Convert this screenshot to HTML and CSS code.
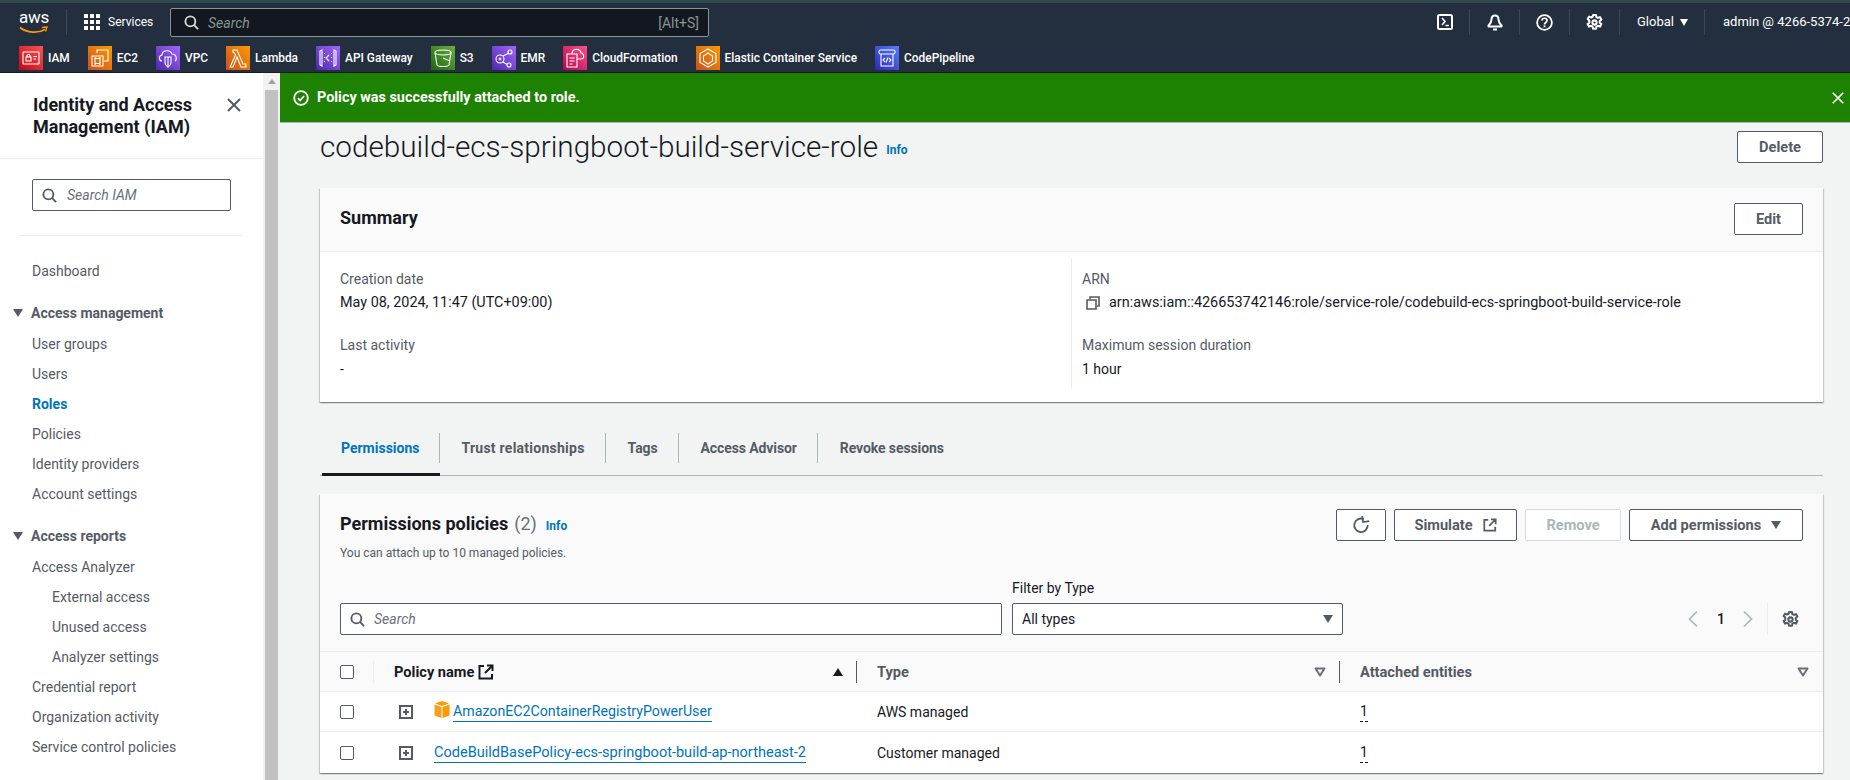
FILE: index.html
```html
<!DOCTYPE html>
<html lang="en">

<head>
    <meta charset="UTF-8">
    <title>IAM - Role</title>
    <link rel="stylesheet" href="styles.css">
</head>

<body>
    <svg class="sprite" width="0" height="0">
        <symbol id="i-search" viewBox="0 0 16 16"><circle cx="6.8" cy="6.8" r="5.3" fill="none" stroke="currentColor" stroke-width="2"/><path d="M10.6 10.6 15 15" fill="none" stroke="currentColor" stroke-width="2"/></symbol>
        <symbol id="i-gear" viewBox="0 0 16 16"><path d="M6.6 1h2.8l.4 2 1.4.7 1.9-.8 1.4 2.3-1.6 1.4v1.6l1.6 1.3-1.4 2.4-1.9-.8-1.4.8-.4 2H6.6l-.4-2-1.4-.8-1.9.8-1.4-2.4 1.6-1.3V6.2L1.5 4.8l1.4-2.3 1.9.8 1.4-.7z" fill="none" stroke="currentColor" stroke-width="1.9" stroke-linejoin="round"/><circle cx="8" cy="8" r="2" fill="none" stroke="currentColor" stroke-width="1.9"/></symbol>
        <symbol id="i-ext" viewBox="0 0 16 16"><path d="M6 2H1.5v12.5H14V10M9 1.5h5.500V7M14 2 7 9" fill="none" stroke="currentColor" stroke-width="2"/></symbol>
        <symbol id="i-expand" viewBox="0 0 14 14"><rect x="1" y="1" width="12" height="12" fill="none" stroke="currentColor" stroke-width="2"/><path d="M7 4v6M4 7h6" stroke="currentColor" stroke-width="2"/></symbol>
        <symbol id="i-close" viewBox="0 0 16 16"><path d="M2 2l12 12M14 2 2 14" fill="none" stroke="currentColor" stroke-width="2"/></symbol>
        <symbol id="i-sort" viewBox="0 0 12 10"><path d="M1.500 1.500h9L6 8.500z" fill="none" stroke="currentColor" stroke-width="2" stroke-linejoin="round"/></symbol>
    </svg>

    <header class="top-nav">
        <div class="nav-row">
            <a class="aws-logo">
                <span class="aws-word">aws</span>
                <svg class="aws-smile" width="30" height="8" viewBox="0 0 30 8"><path d="M1 1.500C8 7 19 7.500 26 3.500" fill="none" stroke="#f90" stroke-width="1.800"/><path d="M23 1.500l5-.5-1.500 4.500" fill="none" stroke="#f90" stroke-width="1.300"/></svg>
            </a>
            <span class="nav-sep first"></span>
            <svg class="grid-icon" width="16" height="16" viewBox="0 0 16 16" fill="#fff">
                <rect width="4" height="4"/><rect x="6" width="4" height="4"/><rect x="12" width="4" height="4"/>
                <rect y="6" width="4" height="4"/><rect x="6" y="6" width="4" height="4"/><rect x="12" y="6" width="4" height="4"/>
                <rect y="12" width="4" height="4"/><rect x="6" y="12" width="4" height="4"/><rect x="12" y="12" width="4" height="4"/>
            </svg>
            <span class="services">Services</span>
            <div class="nav-search">
                <svg width="15" height="15"><use href="#i-search"/></svg>
                <span class="nav-search-text">Search</span>
                <span class="nav-search-key">[Alt+S]</span>
            </div>
            <div class="nav-right">
                <span class="nav-icon">
                    <svg width="16" height="16" viewBox="0 0 16 16"><rect x="1" y="1" width="14" height="14" rx="1.500" fill="none" stroke="#fff" stroke-width="2"/><path d="M5 4l3 3.500L5 11M8.500 11.500H12" fill="none" stroke="#fff" stroke-width="1.600"/></svg>
                </span>
                <span class="nav-icon">
                    <svg width="16" height="17" viewBox="0 0 16 17"><path d="M8 1.500c-2.500 0-3.500 2-3.500 4 0 2.500-1 4-3 6v1h13v-1c-2-2-3-3.500-3-6 0-2-1-4-3.500-4z" fill="none" stroke="#fff" stroke-width="2" stroke-linejoin="round"/><path d="M6 14.500h4v2H6z" fill="#fff"/></svg>
                </span>
                <span class="nav-icon">
                    <svg width="17" height="17" viewBox="0 0 17 17"><circle cx="8.500" cy="8.500" r="7.400" fill="none" stroke="#fff" stroke-width="1.800"/><path d="M6 6.500c0-3 5-3 5 0 0 2-2.500 2-2.500 4" fill="none" stroke="#fff" stroke-width="1.700"/><rect x="7.600" y="11.400" width="1.800" height="1.800" fill="#fff"/></svg>
                </span>
                <span class="nav-icon">
                    <svg width="17" height="17" color="#fff"><use href="#i-gear"/></svg>
                </span>
                <span class="nav-region">Global <i class="caret"></i></span>
                <span class="nav-user">admin @ 4266-5374-2</span>
            </div>
        </div>
        <div class="fav-row">
            <a class="fav"><svg class="fav-icon red" viewBox="0 0 24 24"><rect x="4" y="6" width="16" height="12" rx=".5"/><rect x="7" y="11" width="5" height="4"/><path d="M8 11V9.500c0-1.400 3-1.400 3 0V11M14.500 10.500H18M14.500 13H17"/></svg>IAM</a>
            <a class="fav"><svg class="fav-icon orange" viewBox="0 0 24 24"><path d="M9 7V4h11v11h-4M4 10h11v10H4z"/><rect x="7" y="12.500" width="5" height="5"/><path d="M7 11v1M12 11v1M7 18v1M12 18v1"/></svg>EC2</a>
            <a class="fav"><svg class="fav-icon purple" viewBox="0 0 24 24"><path d="M6 15c-3 0-4-5 0-6 0-5 8-6 10-1 5 0 5 6 3 7"/><path d="M9 11h6v6c0 2-2 3-3 4-1-1-3-2-3-4z"/><path d="M12 11v9"/></svg>VPC</a>
            <a class="fav"><svg class="fav-icon orange" viewBox="0 0 24 24"><path d="M7 4h4l6 14h3v3h-5L11 11 7 21H4l5.500-12L8 6.500H7z"/></svg>Lambda</a>
            <a class="fav"><svg class="fav-icon purple" viewBox="0 0 24 24"><path d="M6 4 4 5v14l2 1zM18 4l2 1v14l-2 1zM8.500 7v1M8.500 11v1M8.500 15v1M15.500 7v1M15.500 11v1M15.500 15v1M13 9l-3 3 3 3"/></svg>API Gateway</a>
            <a class="fav"><svg class="fav-icon green" viewBox="0 0 24 24"><ellipse cx="12" cy="6.500" rx="8" ry="2.500"/><path d="M4 6.500 6 19c1 2 11 2 12 0l2-12.500M12 12l7 3"/></svg>S3</a>
            <a class="fav"><svg class="fav-icon purple" viewBox="0 0 24 24"><circle cx="8" cy="13" r="4"/><circle cx="18" cy="6" r="2"/><circle cx="17" cy="19" r="2"/><path d="M11 10l6-3M10.500 16l5 2.500M6.500 13h3M8 11.500v3"/></svg>EMR</a>
            <a class="fav"><svg class="fav-icon pink" viewBox="0 0 24 24"><path d="M4 8h10v13H4zM6.500 12h5M6.500 15h5M6.500 18h3M9 8c0-6 8-6 9-1 3 0 4 6 0 6h-4"/></svg>CloudFormation</a>
            <a class="fav"><svg class="fav-icon orange" viewBox="0 0 24 24"><path d="M12 3l8 4.500v9L12 21l-8-4.500v-9zM12 7l4.500 3v5L12 18l-4.500-3v-5z"/></svg>Elastic Container Service</a>
            <a class="fav"><svg class="fav-icon blue" viewBox="0 0 24 24"><rect x="4" y="4" width="16" height="4" rx="1.500"/><path d="M6 8v12h12V8M10 12l-2 2 2 2M14 12l2 2-2 2M13 11.500l-2 5"/></svg>CodePipeline</a>
        </div>
    </header>

    <div class="page">
        <aside class="side">
            <div class="side-title">
                <h2>Identity and Access Management (IAM)</h2>
                <svg class="side-close" width="16" height="16"><use href="#i-close"/></svg>
            </div>
            <div class="side-search">
                <svg width="15" height="15"><use href="#i-search"/></svg>
                <span>Search IAM</span>
            </div>
            <div class="side-divider"></div>
            <a class="side-link first">Dashboard</a>
            <div class="side-head"><i class="caret dark"></i>Access management</div>
            <a class="side-link">User groups</a>
            <a class="side-link">Users</a>
            <a class="side-link active">Roles</a>
            <a class="side-link">Policies</a>
            <a class="side-link">Identity providers</a>
            <a class="side-link">Account settings</a>
            <div class="side-head"><i class="caret dark"></i>Access reports</div>
            <a class="side-link">Access Analyzer</a>
            <a class="side-link sub">External access</a>
            <a class="side-link sub">Unused access</a>
            <a class="side-link sub">Analyzer settings</a>
            <a class="side-link">Credential report</a>
            <a class="side-link">Organization activity</a>
            <a class="side-link">Service control policies</a>
        </aside>

        <div class="scrollbar">
            <i class="scroll-up"></i>
            <div class="scroll-thumb"></div>
        </div>

        <main class="main">
            <div class="flash">
                <svg width="16" height="16" viewBox="0 0 16 16"><circle cx="8" cy="8" r="6.800" fill="none" stroke="#fff" stroke-width="1.800"/><path d="M4.800 8.200l2.300 2.300 4-4.500" fill="none" stroke="#fff" stroke-width="1.800"/></svg>
                <span class="flash-text">Policy was successfully attached to role.</span>
                <svg class="flash-close" width="14" height="14" color="#fff"><use href="#i-close"/></svg>
            </div>

            <div class="content">
                <div class="title-row">
                    <h1>codebuild-ecs-springboot-build-service-role</h1>
                    <a class="info">Info</a>
                    <button class="btn delete">Delete</button>
                </div>

                <section class="card summary">
                    <div class="summary-head">
                        <h2>Summary</h2>
                        <button class="btn edit">Edit</button>
                    </div>
                    <div class="summary-body">
                        <div class="summary-col">
                            <div class="field">
                                <div class="field-label">Creation date</div>
                                <div class="field-value wide">May 08, 2024, 11:47 (UTC+09:00)</div>
                            </div>
                            <div class="field">
                                <div class="field-label">Last activity</div>
                                <div class="field-value">-</div>
                            </div>
                        </div>
                        <div class="summary-col right">
                            <div class="field">
                                <div class="field-label">ARN</div>
                                <div class="field-value arn">
                                    <svg width="14" height="14" viewBox="0 0 14 14"><path d="M4 3V1h9v9h-2M1 4h9v9H1z" fill="none" stroke="#545b64" stroke-width="1.600"/></svg>
                                    arn:aws:iam::426653742146:role/service-role/codebuild-ecs-springboot-build-service-role
                                </div>
                            </div>
                            <div class="field">
                                <div class="field-label">Maximum session duration</div>
                                <div class="field-value">1 hour</div>
                            </div>
                        </div>
                    </div>
                </section>

                <nav class="tabs">
                    <a class="tab active">Permissions</a>
                    <a class="tab trust">Trust relationships</a>
                    <a class="tab">Tags</a>
                    <a class="tab">Access Advisor</a>
                    <a class="tab">Revoke sessions</a>
                </nav>

                <section class="card policies">
                    <div class="policies-head">
                        <div>
                            <div class="policies-title">
                                <h2>Permissions policies</h2>
                                <span class="count">(2)</span>
                                <a class="info">Info</a>
                            </div>
                            <p class="policies-sub">You can attach up to 10 managed policies.</p>
                        </div>
                        <div class="actions">
                            <button class="btn refresh">
                                <svg width="18" height="18" viewBox="0 0 16 16"><path d="M10.500 2.800A6 6 0 1 0 14 8" fill="none" stroke="#545b64" stroke-width="1.600"/><path d="M9.500 0v5.500H15" fill="none" stroke="#545b64" stroke-width="1.600" transform="rotate(-8 9 3)"/></svg>
                            </button>
                            <button class="btn simulate">Simulate <svg width="14" height="14" color="#545b64"><use href="#i-ext"/></svg></button>
                            <button class="btn remove">Remove</button>
                            <button class="btn add">Add permissions <i class="caret dark"></i></button>
                        </div>
                    </div>

                    <div class="filters">
                        <div class="filter-search">
                            <svg width="15" height="15" color="#545b64"><use href="#i-search"/></svg>
                            <span>Search</span>
                        </div>
                        <div class="filter-type">
                            <label>Filter by Type</label>
                            <div class="select">All types <i class="caret dark"></i></div>
                        </div>
                        <div class="pager">
                            <svg width="12" height="18" viewBox="0 0 12 18"><path d="M10 1.500 2.500 9l7.500 7.500" fill="none" stroke="#aab7b8" stroke-width="1.700"/></svg>
                            <span class="page-num">1</span>
                            <svg width="12" height="18" viewBox="0 0 12 18"><path d="M2 1.500 9.500 9 2 16.500" fill="none" stroke="#aab7b8" stroke-width="1.700"/></svg>
                            <span class="pager-sep"></span>
                            <svg width="17" height="17" color="#545b64"><use href="#i-gear"/></svg>
                        </div>
                    </div>

                    <div class="t-row t-head">
                        <div class="t-check"><span class="checkbox"></span></div>
                        <div class="t-cell name">
                            <span class="t-title">Policy name</span>
                            <svg width="16" height="16" color="#16191f"><use href="#i-ext"/></svg>
                            <i class="sort-up"></i>
                        </div>
                        <div class="t-cell sep">Type<svg class="sort" width="12" height="10" color="#687078"><use href="#i-sort"/></svg></div>
                        <div class="t-cell sep last">Attached entities<svg class="sort" width="12" height="10" color="#687078"><use href="#i-sort"/></svg></div>
                    </div>
                    <div class="t-row">
                        <div class="t-check"><span class="checkbox"></span></div>
                        <div class="t-cell name body">
                            <svg class="expand" width="14" height="14" color="#545b64"><use href="#i-expand"/></svg>
                            <svg class="cube" width="16" height="17" viewBox="0 0 16 17"><path d="M8 0 1 2.500l7 2.500 7-2.500z" fill="#f90"/><path d="M.5 3.500 7.500 6v11L.5 14.500z" fill="#f7a01d"/><path d="M15.500 3.500 8.500 6v11l7-2.500z" fill="#f90"/></svg>
                            <a class="link">AmazonEC2ContainerRegistryPowerUser</a>
                        </div>
                        <div class="t-cell plain">AWS managed</div>
                        <div class="t-cell plain"><span class="dotted">1</span></div>
                    </div>
                    <div class="t-row">
                        <div class="t-check"><span class="checkbox"></span></div>
                        <div class="t-cell name body">
                            <svg class="expand" width="14" height="14" color="#545b64"><use href="#i-expand"/></svg>
                            <a class="link second">CodeBuildBasePolicy-ecs-springboot-build-ap-northeast-2</a>
                        </div>
                        <div class="t-cell plain">Customer managed</div>
                        <div class="t-cell plain"><span class="dotted">1</span></div>
                    </div>
                </section>
            </div>
        </main>
    </div>
</body>

</html>
```

FILE: styles.css
```css
* {
    box-sizing: border-box;
    margin: 0;
    padding: 0;
}

html,
body {
    height: 780px;
    overflow: hidden;
}

body {
    font-family: Roboto, "Liberation Sans", sans-serif;
    font-size: 14px;
    line-height: 20px;
    color: #16191f;
    background-color: #f2f3f3;
}

.sprite {
    position: absolute;
}

button {
    font-family: inherit;
}

.caret {
    display: inline-block;
    width: 0;
    height: 0;
    border-left: 4px solid transparent;
    border-right: 4px solid transparent;
    border-top: 7px solid #fff;
}

.caret.dark {
    border-left-width: 5px;
    border-right-width: 5px;
    border-top: 8px solid #545b64;
}

/* top nav */
.top-nav {
    height: 73px;
    background-color: #232f3e;
    border-top: 3px solid #2e4a4e;
    border-bottom: 1px solid #16191f;
    color: #fff;
}

.nav-row {
    display: flex;
    align-items: center;
    height: 38px;
    padding: 0 0 0 19px;
}

.aws-logo {
    display: flex;
    flex-direction: column;
    width: 30px;
    height: 24px;
}

.aws-word {
    font-size: 17px;
    line-height: 15px;
    letter-spacing: -.3px;
}

.aws-smile {
    margin-top: 1px;
}

.nav-sep.first {
    width: 1px;
    height: 26px;
    background-color: #414750;
    margin: 0 17px 0 17px;
}

.services {
    font-size: 12px;
    margin-left: 8px;
    width: 62px;
}

.nav-search {
    display: flex;
    align-items: center;
    width: 539px;
    height: 29px;
    margin-top: 1px;
    padding: 0 9px 0 13px;
    background-color: #13171f;
    border: 1px solid #879596;
    border-radius: 2px;
    color: #d5dbdb;
}

.nav-search-text {
    font-style: italic;
    color: #879596;
    margin-left: 9px;
}

.nav-search-key {
    margin-left: auto;
    font-size: 14px;
    color: #879596;
}

.nav-right {
    display: flex;
    align-items: center;
    height: 26px;
    margin-left: auto;
    font-size: 13px;
    white-space: nowrap;
}

.nav-icon {
    display: flex;
    justify-content: center;
    align-items: center;
    width: 50px;
    height: 26px;
    border-right: 1px solid #414750;
}

.nav-region {
    display: flex;
    align-items: center;
    gap: 6px;
    width: 85px;
    height: 26px;
    padding-left: 17px;
    border-right: 1px solid #414750;
}

.nav-user {
    width: 145px;
    padding-left: 18px;
}

.fav-row {
    display: flex;
    gap: 18px;
    height: 24px;
    margin-top: 5px;
    padding-left: 19px;
}

.fav {
    display: flex;
    align-items: center;
    gap: 5px;
    font-size: 11.9px;
    font-weight: 500;
    white-space: nowrap;
}

.fav-icon {
    width: 24px;
    height: 24px;
    fill: none;
    stroke: #fff;
    stroke-width: 1.100;
}

.fav-icon.red {
    background: linear-gradient(45deg, #bd0816, #ff5252);
}

.fav-icon.orange {
    background: linear-gradient(45deg, #c8511b, #f90);
}

.fav-icon.purple {
    background: linear-gradient(45deg, #4d27a8, #a166ff);
}

.fav-icon.green {
    background: linear-gradient(45deg, #1b660f, #6cae3e);
}

.fav-icon.pink {
    background: linear-gradient(45deg, #b0084d, #ff4f8b);
}

.fav-icon.blue {
    background: linear-gradient(45deg, #2e27ad, #527fff);
}

/* page */
.page {
    display: flex;
    height: 707px;
}

.side {
    flex: none;
    width: 263px;
    background-color: #fff;
    color: #545b64;
}

.side-title {
    display: flex;
    justify-content: space-between;
    padding: 21px 21px 20px 33px;
    border-bottom: 1px solid #eaeded;
}

.side-title h2 {
    width: 185px;
    font-size: 18px;
    line-height: 22px;
    font-weight: 700;
    color: #16191f;
}

.side-close {
    margin-top: 3px;
    color: #545b64;
}

.side-search {
    display: flex;
    align-items: center;
    gap: 10px;
    width: 199px;
    height: 32px;
    margin: 20px 0 0 32px;
    padding-left: 9px;
    background-color: #fff;
    border: 1px solid #545b64;
    border-radius: 2px;
}

.side-search span {
    font-style: italic;
    color: #687078;
}

.side-divider {
    height: 1px;
    margin: 24px 20px 0;
    background-color: #eaeded;
}

.side-link {
    display: block;
    height: 30px;
    line-height: 30px;
    padding-left: 32px;
}

.side-link.first {
    margin-top: 20px;
}

.side-link.active {
    color: #0073bb;
    font-weight: 700;
}

.side-link.sub {
    padding-left: 52px;
}

.side-head {
    display: flex;
    align-items: center;
    height: 31px;
    margin-top: 12px;
    padding: 0 0 2px 13px;
    font-weight: 700;
}

.side-head .caret {
    margin-right: 8px;
}

.scrollbar {
    position: relative;
    flex: none;
    width: 17px;
    background-color: #f1f1f1;
}

.scroll-up {
    position: absolute;
    top: 6px;
    left: 5px;
    width: 0;
    height: 0;
    border-left: 4px solid transparent;
    border-right: 4px solid transparent;
    border-bottom: 5px solid #a3a3a3;
}

.scroll-thumb {
    height: 690px;
    margin: 17px 2px 0;
    background-color: #c1c1c1;
}

.main {
    flex: 1;
    min-width: 0;
}

.flash {
    display: flex;
    align-items: center;
    height: 50px;
    padding: 0 5px 0 13px;
    background-color: #1d8102;
    border-bottom: 1px solid #aab7b8;
    color: #fff;
}

.flash-text {
    margin-left: 8px;
    font-size: 14.4px;
    font-weight: 700;
}

.flash-close {
    margin-left: auto;
}

.content {
    padding: 8px 27px 0 40px;
}

.title-row {
    display: flex;
    align-items: center;
    height: 32px;
}

.title-row h1 {
    font-size: 29.7px;
    line-height: 32px;
    font-weight: 300;
}

.info {
    font-size: 12px;
    font-weight: 700;
    color: #0073bb;
}

.title-row .info {
    margin: 5px 0 0 8px;
}

.btn {
    height: 32px;
    background-color: #fff;
    border: 1px solid #545b64;
    border-radius: 2px;
    color: #545b64;
    font-size: 14.6px;
    font-weight: 700;
}

.btn.delete {
    width: 86px;
    margin-left: auto;
}

.btn.edit {
    width: 69px;
}

.card {
    background-color: #fff;
    box-shadow: 0 1px 1px rgba(0, 28, 36, .3), 1px 1px 1px rgba(0, 28, 36, .15), -1px 1px 1px rgba(0, 28, 36, .15);
}

.summary {
    height: 214px;
    margin-top: 25px;
}

.summary-head {
    display: flex;
    justify-content: space-between;
    align-items: flex-start;
    height: 64px;
    padding: 15px 20px 0;
    background-color: #fafafa;
    border-bottom: 1px solid #eaeded;
}

.summary-head h2 {
    margin-top: 4px;
    font-size: 18px;
    line-height: 22px;
    font-weight: 700;
}

.summary-body {
    display: grid;
    grid-template-columns: 751px 1fr;
    padding-top: 6px;
}

.summary-col {
    display: flex;
    flex-direction: column;
    gap: 22px;
    height: 131px;
    padding: 11px 20px 0;
}

.summary-col.right {
    padding-left: 10px;
    border-left: 1px solid #eaeded;
}

.field-label {
    margin-bottom: 4px;
    color: #545b64;
}

.field-value.wide {
    font-size: 14.4px;
}

.field-value.arn {
    display: flex;
    align-items: center;
    gap: 9px;
    padding-left: 4px;
    font-size: 14.45px;
}

.tabs {
    display: flex;
    height: 43px;
    margin-top: 31px;
    border-bottom: 1px solid #aab7b8;
}

.tab {
    position: relative;
    height: 30px;
    padding: 5px 20px 0 22px;
    border-right: 1px solid #aab7b8;
    color: #545b64;
    font-weight: 700;
    letter-spacing: -.1px;
}

.tab:last-child {
    border-right: 0;
}

.tab.trust {
    padding-left: 21px;
    letter-spacing: .25px;
}

.tab.active {
    color: #0073bb;
    padding-left: 19px;
    margin-left: 2px;
    letter-spacing: 0;
}

.tab.active::after {
    content: "";
    position: absolute;
    left: 0;
    right: -1px;
    top: 40px;
    height: 3px;
    background-color: #16191f;
}

.policies {
    height: 279px;
    margin-top: 18px;
    background-color: #fafafa;
}

.policies-head {
    display: flex;
    justify-content: space-between;
    height: 67px;
    padding: 15px 20px 0;
}

.policies-title {
    display: flex;
    align-items: center;
    height: 30px;
}

.policies-title h2 {
    font-size: 18px;
    font-weight: 700;
}

.count {
    margin-left: 6px;
    font-size: 18px;
    color: #687078;
}

.policies-title .info {
    margin: 3px 0 0 9px;
}

.policies-sub {
    margin-top: 6px;
    font-size: 12px;
    line-height: 16px;
    color: #545b64;
}

.actions {
    display: flex;
    gap: 8px;
}

.btn.refresh {
    display: flex;
    justify-content: center;
    align-items: center;
    width: 50px;
}

.btn.simulate {
    display: flex;
    justify-content: center;
    align-items: center;
    gap: 10px;
    width: 123px;
}

.btn.remove {
    width: 96px;
    border-color: #d5dbdb;
    color: #aab7b8;
}

.btn.add {
    display: flex;
    justify-content: center;
    align-items: center;
    gap: 10px;
    width: 174px;
}

.filters {
    display: flex;
    align-items: flex-end;
    gap: 10px;
    height: 57px;
    padding: 0 20px 0;
    margin-top: 17px;
}

.filter-search {
    display: flex;
    align-items: center;
    gap: 9px;
    width: 662px;
    height: 32px;
    padding-left: 9px;
    background-color: #fff;
    border: 1px solid #545b64;
    border-radius: 2px;
}

.filter-search span {
    font-style: italic;
    color: #687078;
}

.filter-type label {
    display: block;
    margin-bottom: 5px;
}

.select {
    display: flex;
    justify-content: space-between;
    align-items: center;
    width: 331px;
    height: 32px;
    padding: 0 9px;
    background-color: #fff;
    border: 1px solid #545b64;
    border-radius: 2px;
}

.pager {
    display: flex;
    align-items: center;
    height: 32px;
    margin-left: auto;
    padding-right: 4px;
}

.page-num {
    margin: 0 17px 0 18px;
    font-weight: 500;
}

.pager-sep {
    width: 1px;
    height: 32px;
    margin: 0 14px 0 13px;
    background-color: #eaeded;
}

.t-row {
    display: grid;
    grid-template-columns: 54px 482px 483px 1fr;
    align-items: center;
    height: 40px;
    background-color: #fff;
    border-bottom: 1px solid #eaeded;
}

.t-head {
    height: 41px;
    margin-top: 16px;
    background-color: #fafafa;
    border-top: 1px solid #eaeded;
    font-size: 14.6px;
    font-weight: 700;
    color: #545b64;
}

.t-row:last-child {
    height: 41px;
    border-bottom: 0;
}

.t-check {
    height: 22px;
    display: flex;
    align-items: center;
    padding-left: 20px;
}

.t-head .t-check {
    border-right: 1px solid #eaeded;
}

.checkbox {
    width: 14px;
    height: 14px;
    background-color: #fff;
    border: 1px solid #545b64;
    border-radius: 2px;
}

.t-cell {
    display: flex;
    align-items: center;
    height: 22px;
}

.t-cell.name {
    padding-left: 20px;
    gap: 4px;
}

.t-title {
    color: #16191f;
}

.sort-up {
    width: 0;
    height: 0;
    margin-left: auto;
    margin-right: 13px;
    border-left: 5px solid transparent;
    border-right: 5px solid transparent;
    border-bottom: 8px solid #16191f;
}

.t-cell.sep {
    padding: 0 13px 0 20px;
    border-left: 1px solid #545b64;
    justify-content: space-between;
}

.t-cell.last {
    padding-right: 14px;
}

.t-cell.plain {
    padding-left: 21px;
}

.t-cell.name.body {
    padding-left: 25px;
    gap: 0;
}

.cube {
    margin: -4px 3px 0 21px;
}

.link {
    font-size: 14.2px;
    color: #0073bb;
    border-bottom: 1px solid #0073bb;
    line-height: 19px;
}

.link.second {
    margin-left: 21px;
    font-size: 14.55px;
}

.dotted {
    border-bottom: 1px dashed #16191f;
    line-height: 19px;
}
```
